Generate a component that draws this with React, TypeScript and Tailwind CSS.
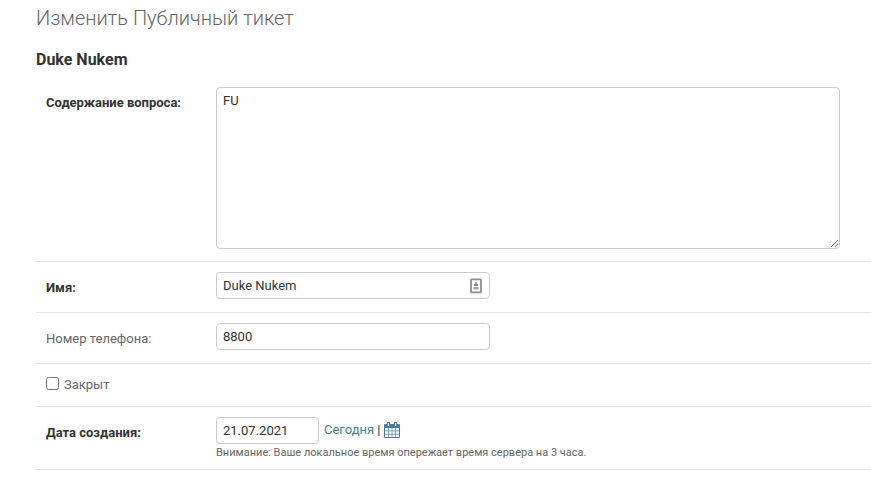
import type { ReactNode } from "react";

const inputBase =
  "block rounded-[4px] border border-[#cccccc] bg-white px-[6px] text-[13px] text-[#333333] outline-none";

function Row({ height, children }: { height: string; children: ReactNode }) {
  return (
    <div className={`flex items-start border-b border-[#e6e6e6] px-[10px] pt-[10px] ${height}`}>
      {children}
    </div>
  );
}

function Label({ required, htmlFor, children }: { required?: boolean; htmlFor: string; children: ReactNode }) {
  return (
    <label
      htmlFor={htmlFor}
      className={`w-[170px] shrink-0 pt-[8px] text-[13px] leading-[15px] ${
        required ? "font-bold text-[#333333]" : "text-[#666666]"
      }`}
    >
      {children}
    </label>
  );
}

function CalendarIcon() {
  return (
    <svg width="16" height="16" viewBox="0 0 16 16" fill="#447e9b">
      <path
        fillRule="evenodd"
        d="M1.200 2h1.600V1.200Q2.800 0 4 0h.800Q6 0 6 1.200V2h4v-.8Q10 0 11.200 0h.8q1.200 0 1.200 1.200V2h1.600q1.200 0 1.200 1.200v11.600q0 1.200-1.200 1.200H1.200Q0 16 0 14.800V3.200Q0 2 1.200 2zM1 6v2.600h3V6zM4.600 6v2.600h3.100V6zM8.300 6v2.600h3.100V6zM12 6v2.600h3V6zM1 9.200v2.600h3V9.200zM4.600 9.200v2.600h3.100V9.200zM8.300 9.200v2.600h3.100V9.200zM12 9.200v2.600h3V9.200zM1 12.400V15h3v-2.600zM4.600 12.400V15h3.100v-2.600zM8.300 12.400V15h3.100v-2.600zM12 12.400V15h3v-2.600zM3.800 1v3H5V1zM11 1v3h1.200V1z"
      />
    </svg>
  );
}

function ContactIcon() {
  return (
    <svg width="12" height="16" viewBox="0 0 12 16" fill="none">
      <rect x="1" y="1.400" width="10" height="13" rx="0.5" stroke="#8f8f8f" strokeWidth="1.800" />
      <path d="M5.200 4h1.600v2H8v2H4V6h1.200z" fill="#8c8c8c" />
      <path d="M3.500 9h5v2h-5z" fill="#a5a5a5" />
      <path d="M3 11h6v1H3z" fill="#d8d8d8" />
    </svg>
  );
}

export default function App() {
  return (
    <main className="h-[492px] overflow-hidden bg-white pl-[36px] font-[Roboto,sans-serif] text-[13px] text-[#333333]">
      <h1 className="h-[50px] pt-[6px] text-[20px] font-light leading-[24px] text-[#666666]">
        Изменить Публичный тикет
      </h1>
      <h2 className="h-[27px] text-[16px] font-bold leading-[19px] text-[#333333]">Duke Nukem</h2>

      <form>
        <Row height="h-[185px]">
          <Label required htmlFor="content">Содержание вопроса:</Label>
          <textarea
            id="content"
            defaultValue="FU"
            className={`${inputBase} h-[162px] w-[624px] resize py-[5px] leading-[15px]`}
          />
        </Row>

        <Row height="h-[51px]">
          <Label required htmlFor="name">Имя:</Label>
          <div className="relative">
            <input id="name" defaultValue="Duke Nukem" className={`${inputBase} h-[27px] w-[274px]`} />
            <span className="absolute right-[8px] top-[6px]">
              <ContactIcon />
            </span>
          </div>
        </Row>

        <Row height="h-[51px]">
          <Label htmlFor="phone">Номер телефона:</Label>
          <input id="phone" defaultValue="8800" className={`${inputBase} h-[27px] w-[274px]`} />
        </Row>

        <Row height="h-[43px]">
          <input id="closed" type="checkbox" className="mt-[3px] block h-[13px] w-[13px]" />
          <label htmlFor="closed" className="ml-[5px] mt-[3px] text-[13px] leading-[15px] text-[#666666]">
            Закрыт
          </label>
        </Row>

        <Row height="h-[63px]">
          <Label required htmlFor="created">Дата создания:</Label>
          <div>
            <div className="flex items-start">
              <input id="created" defaultValue="21.07.2021" className={`${inputBase} h-[27px] w-[103px]`} />
              <div className="ml-[5px] mt-[5px] flex text-[13px] leading-[15px] text-[#333333]">
                <a href="#today" className="text-[#447e9b]">Сегодня</a>
                <span className="whitespace-pre"> | </span>
                <a href="#calendar"><CalendarIcon /></a>
              </div>
            </div>
            <p className="mt-[2px] text-[11px] leading-[13px] text-[#666666]">
              Внимание: Ваше локальное время опережает время сервера на 3 часа.
            </p>
          </div>
        </Row>
      </form>
    </main>
  );
}
